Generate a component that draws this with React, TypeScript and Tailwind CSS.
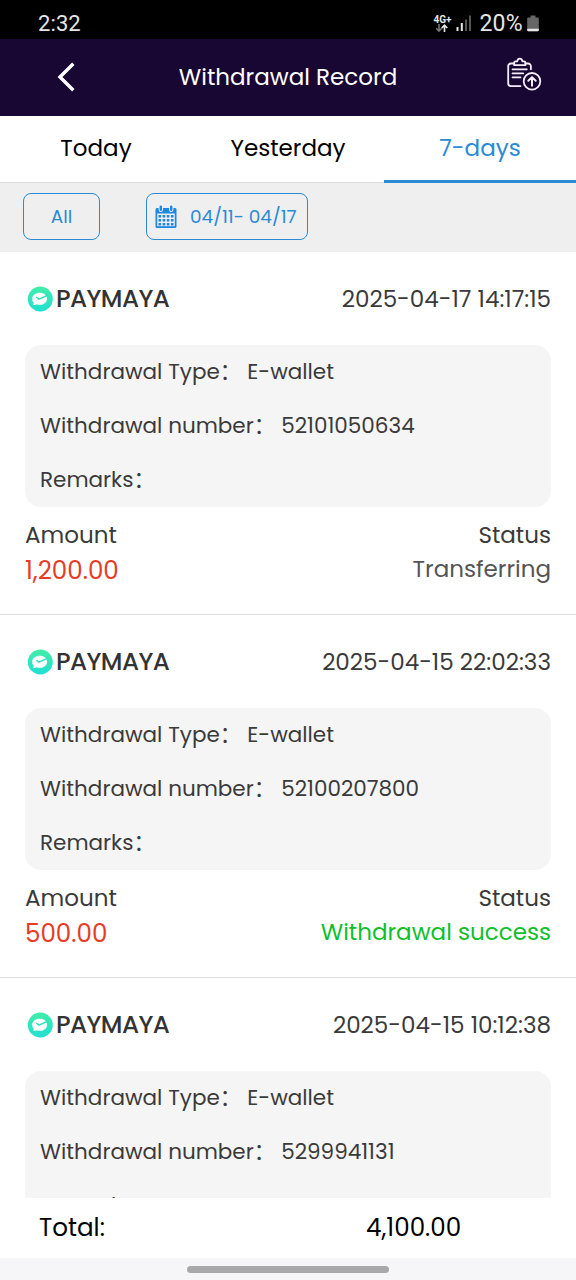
import React from "react";
import { clsx } from "clsx";

interface WithdrawalRecord {
  date: string;
  number: string;
  amount: string;
  status: string;
  statusClass: string;
}

const records: WithdrawalRecord[] = [
  {
    date: "2025-04-17 14:17:15",
    number: "52101050634",
    amount: "1,200.00",
    status: "Transferring",
    statusClass: "text-[#555555]",
  },
  {
    date: "2025-04-15 22:02:33",
    number: "52100207800",
    amount: "500.00",
    status: "Withdrawal success",
    statusClass: "text-[#10bf2c]",
  },
  {
    date: "2025-04-15 10:12:38",
    number: "5299941131",
    amount: "",
    status: "",
    statusClass: "text-[#10bf2c]",
  },
];

const StatusBar = () => (
  <div className="flex h-[39px] shrink-0 items-center bg-black pt-[8px] pl-[38px] pr-[37px] font-[Roboto,sans-serif] text-[22px] leading-none text-[#e6e6e6]">
    <span className="tracking-[0.1px]">2:32</span>
    <div className="ml-auto flex items-center">
      <div className="flex w-[18px] flex-col items-center">
        <span className="text-[10px] font-bold leading-[9px]">4G+</span>
        <svg width="14" height="8" viewBox="0 0 14 8" fill="none" strokeWidth="1.6">
          <path d="M4 0v6.6M1.2 4.2L4 7l2.8-2.8" stroke="#777" />
          <path d="M9.5 8V1.4M6.7 4L9.5 1.2 12.3 4" stroke="#e6e6e6" />
        </svg>
      </div>
      <svg className="ml-[5px]" width="16" height="17" viewBox="0 0 16 17">
        <rect x="0.5" y="12" width="2" height="4" fill="#e6e6e6" />
        <rect x="4.8" y="8" width="2" height="8" fill="#e6e6e6" />
        <rect x="9" y="4.5" width="2" height="11.5" fill="#555" />
        <rect x="13" y="0.5" width="2" height="15.5" fill="#555" />
      </svg>
      <span className="ml-[7px] text-[23px] tracking-[0.3px]">20%</span>
      <svg className="ml-[4px]" width="12" height="17" viewBox="0 0 12 17">
        <path d="M3.5 0.5h5v2H11a.8.8 0 0 1 .8.8V15a1.3 1.3 0 0 1-1.3 1.3h-9A1.3 1.3 0 0 1 .2 15V3.3a.8.8 0 0 1 .8-.8h2.5z" fill="#666" />
        <path d="M.2 13.8h11.6V15a1.3 1.3 0 0 1-1.3 1.3h-9A1.3 1.3 0 0 1 .2 15z" fill="#e6e6e6" />
      </svg>
    </div>
  </div>
);

const Header = () => (
  <header className="flex h-[77px] shrink-0 items-center bg-[#190733] pl-[56px] pr-[34px] text-white">
    <svg className="-mt-px" width="20" height="30" viewBox="0 0 20 30" fill="none" stroke="currentColor" strokeWidth="3.4">
      <path d="M17.3 1.8L4 15l13.3 13.2" />
    </svg>
    <h1 className="mr-[6px] flex-1 text-center text-[23.04px]">Withdrawal Record</h1>
    <svg
      className="-mt-[5px]"
      width="36"
      height="36"
      viewBox="0 0 36 36"
      fill="none"
      stroke="#f4eefb"
      strokeWidth="1.8"
      strokeLinecap="round"
      strokeLinejoin="round"
    >
      <path d="M8 6.5H5a2.8 2.8 0 0 0-2.8 2.8v17a2.8 2.8 0 0 0 2.8 2.8h9.5" />
      <path d="M19.5 6.5h2.6a2.8 2.8 0 0 1 2.8 2.8v3" />
      <path d="M8.2 8.2V5.8c0-.9.6-1.4 1.5-1.4h1.5c.3-1.8 1.2-2.7 2.6-2.7s2.3.9 2.6 2.7h1.5c.9 0 1.5.5 1.5 1.4v2.4z" />
      <path d="M6.5 12.3h14.3M6.5 16.3h10.7M6.5 20.3h8" />
      <circle cx="26" cy="24.3" r="8.3" />
      <path d="M26 28.8v-8.3M22.3 23.8l3.7-3.7 3.7 3.7" strokeWidth="2" />
    </svg>
  </header>
);

const Tabs = () => (
  <nav className="grid h-[67px] shrink-0 grid-cols-3 bg-white text-center text-[23.04px] leading-[64px] text-black">
    <div className="border-b border-[#dcdcdc]">Today</div>
    <div className="border-b border-[#dcdcdc]">Yesterday</div>
    <div className="border-b-[3px] border-[#2b8ad6] text-[#2b8ad6]">7-days</div>
  </nav>
);

const CalendarIcon = () => (
  <svg width="22" height="24" viewBox="0 0 22 24">
    <path d="M2 3h18a1.5 1.5 0 0 1 1.5 1.5v17A1.5 1.5 0 0 1 20 23H2a1.5 1.5 0 0 1-1.5-1.5v-17A1.5 1.5 0 0 1 2 3z" fill="#1b87e6" />
    <path d="M2.2 8.5h17.6v12.7H2.2z" fill="#efefef" />
    <path
      d="M3.5 11.3h15M3.5 15.3h15M3.5 19.3h15"
      stroke="#1b87e6"
      strokeWidth="2.4"
      strokeDasharray="2.6 1.53"
    />
    <path d="M5.8 1.6v3.2M16.2 1.6v3.2" stroke="#efefef" strokeWidth="4.4" strokeLinecap="round" />
    <path d="M5.8 1.6v3.2M16.2 1.6v3.2" stroke="#1b87e6" strokeWidth="2.4" strokeLinecap="round" />
  </svg>
);

const Filters = () => (
  <div className="flex h-[69px] shrink-0 items-start gap-[46px] bg-[#efefef] pt-[10px] pl-[23px] text-[18.43px] text-[#2b8ad6]">
    <button className="h-[47px] w-[77px] rounded-lg border border-[#2b8ad6]">All</button>
    <button className="flex h-[47px] w-[162px] items-center rounded-lg border border-[#2b8ad6] pl-[8px]">
      <CalendarIcon />
      <span className="ml-[13px] whitespace-nowrap">04/11- 04/17</span>
    </button>
  </div>
);

const MayaLogo = () => (
  <svg width="26" height="26" viewBox="0 0 26 26">
    <defs>
      <linearGradient id="maya" x1="0" y1="0" x2="0" y2="1">
        <stop offset="0" stopColor="#43eda9" />
        <stop offset="1" stopColor="#20dfd2" />
      </linearGradient>
    </defs>
    <circle cx="13.3" cy="13" r="12.5" fill="url(#maya)" />
    <path d="M12.8 6.8c4.3 0 7.2 2.4 7.2 5.9s-2.9 6.1-7.2 6.1c-1.3 0-2.5-.2-3.5-.6-.9.7-2.1 1-3.3.8.5-.6.8-1.4.7-2.2-1-1.1-1.500-2.500-1.500-4.100 0-3.500 3.200-5.900 7.600-5.900z" fill="#fff" />
    <path d="M9.300 11l2.700 2.100 9.300-4.200" fill="none" stroke="#2ce2bd" strokeWidth="1.5" />
  </svg>
);

const DetailRow: React.FC<{ label: string; value?: string }> = ({ label, value }) => (
  <div className="flex h-[54px] items-baseline whitespace-nowrap leading-[54px]">
    <span>{label}</span>
    <span className="w-[27.5px] font-['Noto_Sans_CJK_SC',sans-serif] leading-none">：</span>
    <span>{value}</span>
  </div>
);

const RecordItem: React.FC<{ record: WithdrawalRecord }> = ({ record }) => (
  <section className="h-[363px] shrink-0 border-b border-[#dedede] bg-white px-[25px] text-[23.04px] text-[#3a3a3a]">
    <div className="flex h-[93px] items-center pt-[2px]">
      <div className="flex items-center pl-[2px]">
        <MayaLogo />
        <span className="ml-[3px] text-[24.58px] font-medium tracking-[-0.6px] text-[#333333]">PAYMAYA</span>
      </div>
      <span className="ml-auto whitespace-nowrap">{record.date}</span>
    </div>

    <div className="h-[162px] rounded-2xl bg-[#f5f5f5] pl-[15px] text-[21.5px]">
      <DetailRow label="Withdrawal Type" value="E-wallet" />
      <DetailRow label="Withdrawal number" value={record.number} />
      <DetailRow label="Remarks" />
    </div>

    {record.amount && (
      <div className="pt-[11px] leading-[35px]">
        <div className="flex justify-between">
          <span>Amount</span>
          <span>Status</span>
        </div>
        <div className="flex justify-between">
          <span className="text-[24.58px] text-[#e63c24]">{record.amount}</span>
          <span className={clsx("-mt-px", record.statusClass)}>{record.status}</span>
        </div>
      </div>
    )}
  </section>
);

const App: React.FC = () => {
  return (
    <div className="flex h-[1280px] w-[576px] flex-col overflow-hidden bg-white font-[Poppins,Inter,sans-serif]">
      <StatusBar />
      <Header />
      <Tabs />
      <Filters />

      {/* Records */}
      <main className="flex min-h-0 flex-1 flex-col overflow-hidden">
        {records.map((record) => (
          <RecordItem key={record.date} record={record} />
        ))}
      </main>

      {/* Total */}
      <footer className="flex h-[60px] shrink-0 items-center bg-white pl-[39px] text-[24.58px] text-black">
        <span className="w-[327px]">Total:</span>
        <span>4,100.00</span>
      </footer>

      {/* Gesture bar */}
      <div className="flex h-[22px] shrink-0 justify-center bg-[#f6f6f9] pt-[8px]">
        <div className="h-[7px] w-[202px] rounded-full bg-[#a9a9ab]" />
      </div>
    </div>
  );
};

export default App;
